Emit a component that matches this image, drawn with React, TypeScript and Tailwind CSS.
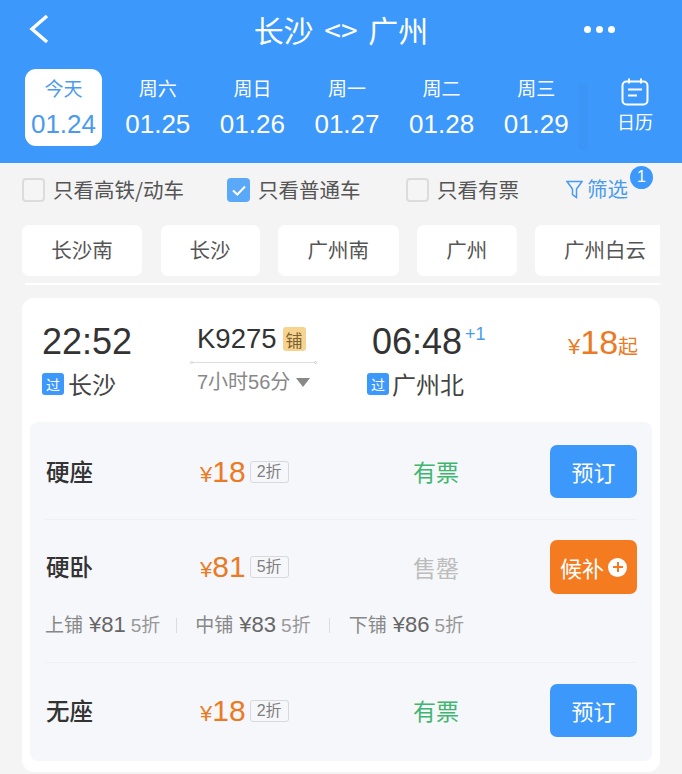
const cjk = "font-['Noto_Sans_CJK_SC','Noto_Sans',sans-serif]";
const latin = "font-['Liberation_Sans','Noto_Sans_CJK_SC',sans-serif]";

const days = [
  { week: "今天", date: "01.24", active: true },
  { week: "周六", date: "01.25" },
  { week: "周日", date: "01.26" },
  { week: "周一", date: "01.27" },
  { week: "周二", date: "01.28" },
  { week: "周三", date: "01.29" },
];

const stations = [
  { name: "长沙南", width: "w-[120px]" },
  { name: "长沙", width: "w-[99px]" },
  { name: "广州南", width: "w-[120.5px]" },
  { name: "广州", width: "w-[99.5px]" },
  { name: "广州白云", width: "w-[140px]" },
];

function Check({ checked, label, width }: { checked?: boolean; label: string; width: string }) {
  return (
    <div className={`flex items-center ${width}`}>
      {checked ? (
        <span className="flex h-[24px] w-[23px] items-center justify-center rounded-[4px] bg-[#5aa9f8]">
          <svg width="16" height="13" viewBox="0 0 16 13" fill="none">
            <path d="M2 6.5 6.3 10.5 14 2.5" stroke="white" strokeWidth="2" />
          </svg>
        </span>
      ) : (
        <span className="h-[24px] w-[23px] rounded-[4px] border-2 border-[#dcdcdc] bg-[#f5f5f6]" />
      )}
      <span className="ml-[8px] pb-[2px] text-[20.5px] leading-[24px] text-[#555]">{label}</span>
    </div>
  );
}

function TransitTag() {
  return (
    <span className="flex h-[22px] w-[22px] items-center justify-center rounded-[3px] bg-[#3c98fa] text-[14px] leading-none text-white">
      过
    </span>
  );
}

function Price({ value, discount }: { value: string; discount: string }) {
  return (
    <div className="flex w-[213px] items-center">
      <span className={`${latin} flex items-baseline text-[#ea7a24]`}>
        <span className="text-[22px] leading-none">¥</span>
        <span className="text-[30px] leading-none">{value}</span>
      </span>
      <span className={`${latin} ml-[4px] flex h-[22px] w-[39px] items-center justify-center rounded-[3px] border border-[#d9d9d9] text-[16px] leading-none text-[#808080]`}>
        {discount}
      </span>
    </div>
  );
}

function SeatRow({ name, value, discount, status, statusColor, button }: {
  name: string;
  value: string;
  discount: string;
  status: string;
  statusColor: string;
  button: React.ReactNode;
}) {
  return (
    <div className="flex items-center pl-[16px] pr-[15px]">
      <span className="w-[154px] text-[23.5px] font-medium leading-none text-[#333]">{name}</span>
      <Price value={value} discount={discount} />
      <span className={`w-[137px] text-[23px] leading-none ${statusColor}`}>{status}</span>
      {button}
    </div>
  );
}

function BookButton() {
  return (
    <button type="button" className="flex h-[53px] w-[87px] items-center justify-center rounded-[7px] bg-[#3c98fa] text-[22px] text-white">
      预订
    </button>
  );
}

function Berth({ name, price }: { name: string; price: string }) {
  return (
    <span className="flex items-baseline whitespace-nowrap">
      <span className="text-[#888]">{name}</span>
      <span className={`${latin} ml-[6px] text-[22px] text-[#666]`}>¥{price}</span>
      <span className={`${latin} ml-[5px]`}>5折</span>
    </span>
  );
}

export default function App() {
  return (
    <div className={`${cjk} h-[774px] w-[682px] overflow-hidden bg-[#f4f4f5]`}>
      <header className="h-[163px] bg-[#3c98fa] text-white">
        <div className="flex h-[69px] items-center pb-[11px]">
          <div className="flex w-[172px] pl-[28px]">
            <svg width="22" height="30" viewBox="0 0 22 30" fill="none">
              <path d="M19 2 4 15l15 13" stroke="white" strokeWidth="3.4" />
            </svg>
          </div>
          <div className="w-[338px] text-center text-[30px] leading-none [word-spacing:4px]">长沙 &lt;&gt; 广州</div>
          <div className="flex w-[172px] gap-[5px] pl-[74px]">
            <span className="h-[7px] w-[7px] rounded-full bg-white" />
            <span className="h-[7px] w-[7px] rounded-full bg-white" />
            <span className="h-[7px] w-[7px] rounded-full bg-white" />
          </div>
        </div>
        <div className="flex pl-[25px]">
          <div className="grid w-[550px] grid-cols-[77px_repeat(5,94.6px)]">
            {days.map((d) => (
              <div
                key={d.date}
                className={`flex h-[77px] flex-col items-center rounded-[11px] pt-[7px] ${d.active ? "w-[77px] bg-white text-[#4a9bee]" : "ml-[17px]"}`}
              >
                <span className="whitespace-nowrap text-[19px] leading-[24px]">{d.week}</span>
                <span className={`${latin} mt-[9px] text-[26px] leading-[30px]`}>{d.date}</span>
              </div>
            ))}
          </div>
          <div className="ml-[3px] mt-[14px] h-[67px] w-[10px] rounded-[5px] bg-[#3a95f6]" />
          <div className="flex w-[94px] flex-col items-center pt-[9px]">
            <svg width="28" height="28" viewBox="0 0 28 28" fill="none" stroke="white" strokeWidth="2">
              <rect x="1.5" y="3.5" width="25" height="23" rx="4" />
              <path d="M8 0.5v5M20 0.5v5M7 11.5h14M7 17.5h9" />
            </svg>
            <span className="mt-[3px] text-[18px] leading-[24px]">日历</span>
          </div>
        </div>
      </header>

      <div className="flex h-[62px] items-start pl-[22px] pt-[14px]">
        <Check label="只看高铁/动车" width="w-[205px]" />
        <Check checked label="只看普通车" width="w-[179px]" />
        <Check label="只看有票" width="w-[160px]" />
        <div className="flex h-[24px] items-center text-[#4a9bee]">
          <svg width="17" height="19" viewBox="0 0 17 19" fill="none" stroke="#4a9bee" strokeWidth="1.5">
            <path d="M1 1.5h15L10.5 9v8.5l-4-3V9z" />
          </svg>
          <span className="ml-[4px] pb-[2px] text-[20.5px] leading-[24px]">筛选</span>
          <span className={`${latin} mb-[24px] ml-[2px] flex h-[23px] w-[23px] items-center justify-center rounded-full bg-[#3c98fa] text-[16px] leading-none text-white`}>1</span>
        </div>
      </div>

      <div className="ml-[22px] flex w-[638px] gap-[18.5px] overflow-hidden">
        {stations.map((s) => (
          <div key={s.name} className={`flex h-[51px] shrink-0 items-center justify-center rounded-[7px] bg-white pb-[2px] text-[20.5px] text-[#555] ${s.width}`}>
            {s.name}
          </div>
        ))}
      </div>

      <div className="ml-[25px] mt-[7px] h-[2px] w-[635px] bg-white" />

      <section className="ml-[22px] mt-[13px] h-[474px] w-[638px] rounded-[12px] bg-white">
        <div className="flex h-[124px] pt-[25px]">
          <div className="w-[168px] pl-[20px]">
            <div className={`${latin} text-[36px] leading-[38px] text-[#333]`}>22:52</div>
            <div className="mt-[7px] flex items-center">
              <TransitTag />
              <span className="ml-[4px] text-[24px] leading-[32px] text-[#444]">长沙</span>
            </div>
          </div>
          <div className="w-[168px]">
            <div className="flex items-center pl-[7px]">
              <span className={`${latin} text-[27.5px] leading-[32px] text-[#333]`}>K9275</span>
              <span className="ml-[6px] flex h-[24px] w-[23px] items-center justify-center rounded-[3px] bg-[#f6d48f] text-[17px] leading-none text-[#7d6132]">铺</span>
            </div>
            <div className="mt-[6px] flex w-[127px] items-center">
              <span className="h-[3px] w-[3px] rounded-full border border-[#ccc]" />
              <span className="h-px flex-1 bg-[#ddd]" />
              <span className="h-[3px] w-[3px] rounded-full border border-[#ccc]" />
            </div>
            <div className="mt-[5px] flex items-center pl-[7px]">
              <span className={`${latin} text-[20px] leading-[26px] text-[#888]`}>7小时56分</span>
              <span className="ml-[6px] h-0 w-0 border-x-[7px] border-t-[9px] border-x-transparent border-t-[#888]" />
            </div>
          </div>
          <div className="w-[210px] pl-[9px]">
            <div className="flex items-start">
              <span className={`${latin} ml-[5px] text-[36px] leading-[38px] text-[#333]`}>06:48</span>
              <span className={`${latin} ml-[3px] text-[18px] leading-[22px] text-[#4a9bee]`}>+1</span>
            </div>
            <div className="mt-[7px] flex items-center">
              <TransitTag />
              <span className="ml-[3px] text-[24px] leading-[32px] text-[#444]">广州北</span>
            </div>
          </div>
          <div className="flex items-baseline self-start pt-[1px] text-[#ea7a24]">
            <span className={`${latin} text-[22px] leading-none`}>¥</span>
            <span className={`${latin} text-[34px] leading-[36px]`}>18</span>
            <span className="text-[20px] leading-none">起</span>
          </div>
        </div>

        <div className="ml-[8px] h-[339px] w-[622px] rounded-[8px] bg-[#f5f7fa] pt-[23px]">
          <SeatRow name="硬座" value="18" discount="2折" status="有票" statusColor="text-[#3fb56f]" button={<BookButton />} />
          <div className="mx-[15px] mt-[21px] h-px bg-[#eef0f3]" />
          <div className="mt-[20px]">
            <SeatRow
              name="硬卧"
              value="81"
              discount="5折"
              status="售罄"
              statusColor="text-[#bcbcbc]"
              button={
                <button type="button" className="flex h-[54px] w-[87px] items-center justify-center rounded-[7px] bg-[#f47b20] text-[22px] text-white">
                  候补
                  <span className="ml-[4px] flex h-[19px] w-[19px] items-center justify-center rounded-full bg-white">
                    <svg width="10" height="10" viewBox="0 0 10 10" fill="none" stroke="#f47b20" strokeWidth="2">
                      <path d="M5 0v10M0 5h10" />
                    </svg>
                  </span>
                </button>
              }
            />
          </div>
          <div className="mt-[16px] flex h-[30px] items-center pl-[15px] text-[19px] leading-none text-[#999]">
            <Berth name="上铺" price="81" />
            <span className="ml-[16px] mr-[18px] h-[15px] w-px bg-[#ddd]" />
            <Berth name="中铺" price="83" />
            <span className="ml-[18px] mr-[19px] h-[15px] w-px bg-[#ddd]" />
            <Berth name="下铺" price="86" />
          </div>
          <div className="mx-[15px] mt-[22px] h-px bg-[#eef0f3]" />
          <div className="mt-[21px]">
            <SeatRow name="无座" value="18" discount="2折" status="有票" statusColor="text-[#3fb56f]" button={<BookButton />} />
          </div>
        </div>
      </section>
    </div>
  );
}
